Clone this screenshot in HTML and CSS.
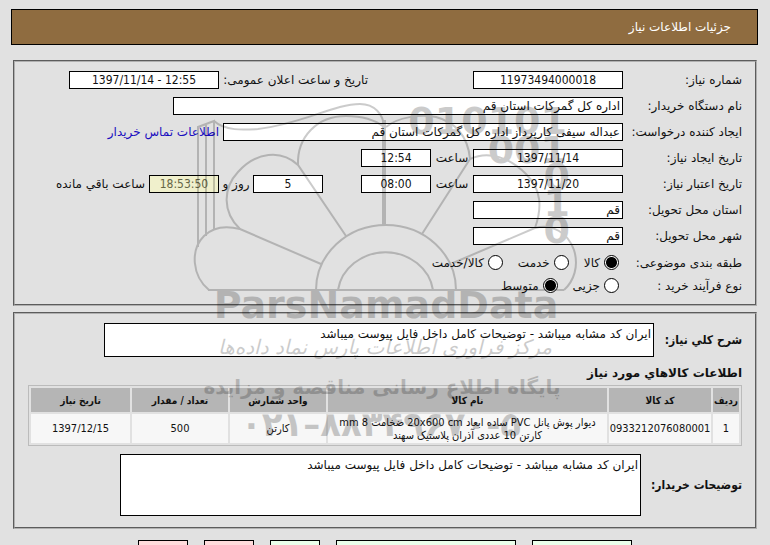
FILE: index.html
```html
<!DOCTYPE html>
<html lang="fa" dir="rtl">
<head>
<meta charset="utf-8">
<title>جزئیات اطلاعات نیاز</title>
<link rel="stylesheet" href="styles.css">
</head>
<body>
<header class="title-bar"><h1>جزئیات اطلاعات نیاز</h1></header>
<main>
<form>
  <section class="panel need">
    <div class="row">
      <label class="name" for="number">شماره نیاز:</label>
      <input class="box medium spaced" id="number" value="11973494000018" readonly>
      <label class="announce" for="announce">تاریخ و ساعت اعلان عمومی:</label>
      <input class="box medium" id="announce" dir="ltr" value="1397/11/14 - 12:55" readonly>
    </div>
    <div class="row">
      <label class="name" for="buyer">نام دستگاه خریدار:</label>
      <input class="box wide" id="buyer" value="اداره کل گمرکات استان قم" readonly>
    </div>
    <div class="row">
      <label class="name" for="creator">ایجاد کننده درخواست:</label>
      <input class="box long" id="creator" value="عبداله سیفی کارپرداز اداره کل گمرکات استان قم" readonly>
      <a class="contact" href="#contact">اطلاعات تماس خریدار</a>
    </div>
    <div class="row">
      <label class="name" for="made">تاریخ ایجاد نیاز:</label>
      <input class="box medium" id="made" value="1397/11/14" readonly>
      <label class="hour" for="made-hour">ساعت</label>
      <input class="box short" id="made-hour" value="12:54" readonly>
    </div>
    <div class="row">
      <label class="name" for="valid">تاریخ اعتبار نیاز:</label>
      <input class="box medium" id="valid" value="1397/11/20" readonly>
      <label class="hour" for="valid-hour">ساعت</label>
      <input class="box short" id="valid-hour" value="08:00" readonly>
      <input class="box short days" id="days" value="5" readonly>
      <label class="day-label" for="days">روز و</label>
      <input class="box short timer" id="left" value="18:53:50" readonly>
      <label class="left-label" for="left">ساعت باقي مانده</label>
    </div>
    <div class="row">
      <label class="name" for="province">استان محل تحویل:</label>
      <input class="box medium start" id="province" value="قم" readonly>
    </div>
    <div class="row">
      <label class="name" for="city">شهر محل تحویل:</label>
      <input class="box medium start" id="city" value="قم" readonly>
    </div>
    <div class="choice-rows">
      <div class="row choices">
        <span class="name">طبقه بندی موضوعی:</span>
        <label><input type="radio" name="kind" checked>کالا</label>
        <label><input type="radio" name="kind">خدمت</label>
        <label><input type="radio" name="kind">کالا/خدمت</label>
      </div>
      <div class="row choices">
        <span class="name">نوع فرآیند خرید :</span>
        <label><input type="radio" name="size">جزیی</label>
        <label><input type="radio" name="size" checked>متوسط</label>
      </div>
    </div>
  </section>

  <section class="panel goods">
    <div class="memo">
      <label class="summary-label" for="summary">شرح کلي نیاز:</label>
      <textarea class="summary" id="summary" readonly>ایران کد مشابه میباشد - توضیحات کامل داخل فایل پیوست میباشد</textarea>
    </div>
    <h2>اطلاعات کالاهاي مورد نیاز</h2>
    <table>
      <thead>
        <tr><th class="c-row">ردیف</th><th class="c-code">کد کالا</th><th class="c-name">نام کالا</th><th class="c-unit">واحد شمارش</th><th class="c-count">تعداد / مقدار</th><th class="c-date">تاریخ نیاز</th></tr>
      </thead>
      <tbody>
        <tr><td>1</td><td>0933212076080001</td><td>دیوار پوش پانل PVC ساده ابعاد 20x600 cm ضخامت 8 mm<br>کارتن 10 عددی آذران پلاستیک سهند</td><td>کارتن</td><td>500</td><td>1397/12/15</td></tr>
      </tbody>
    </table>
    <div class="memo">
      <label class="notes-label" for="notes">توضیحات خریدار:</label>
      <textarea class="notes" id="notes" readonly>ایران کد مشابه میباشد - توضیحات کامل داخل فایل پیوست میباشد</textarea>
    </div>
  </section>

  <div class="actions">
    <button class="go b-medium" type="button" aria-label="پاسخ"></button>
    <button class="go b-wide" type="button" aria-label="مشاهده"></button>
    <button class="go" type="button" aria-label="چاپ"></button>
    <button class="stop" type="button" aria-label="بازگشت"></button>
    <button class="stop" type="button" aria-label="خروج"></button>
  </div>
</form>
</main>
<svg class="watermark" viewBox="0 0 770 545" direction="ltr" aria-hidden="true">
  <g fill="none" stroke="#000" stroke-width="2">
    <path d="M316 290A70 65 0 0 1 456 290M338 290A48 44 0 0 1 433 290M208 290H564"/>
    <path d="M209 290C192 276 190 250 204 236C214 226 228 226 240 229L321 264"/>
    <path d="M240 229C222 212 223 188 238 172C256 152 281 149 298 165L346 236"/>
    <path d="M298 165C297 137 317 116 346 116C362 116 374 119 384 127M386 127C398 117 420 114 436 117C455 122 468 136 470 159L422 234"/>
    <path d="M470 159C489 150 510 158 526 174C542 190 542 208 535 228L453 263"/>
    <path d="M535 228C552 223 568 233 574 250C579 266 574 281 564 290"/>
    <path d="M214 121C225 131 243 130 258 129C302 124 334 104 360 104C374 104 384 114 384 128M198 247V127L214 121V230M206 236V124"/>
    <path stroke-width="4" d="M384 120V225"/>
  </g>
  <g class="digits">
    <text x="567" y="134">010101</text><text x="567" y="163">001</text><text x="570" y="190">0</text><text x="570" y="216">1</text><text x="570" y="243">0</text>
  </g>
  <text class="brand" x="386" y="318">ParsNamadData</text>
  <text class="script" x="385" y="354" direction="rtl">مرکز فرآوری اطلاعات پارس نماد داده‌ها</text>
  <text class="slogan" x="382" y="394" direction="rtl">پایگاه اطلاع رسانی مناقصه و مزایده</text>
  <text class="phone" x="381" y="436">۰۲۱–۸۸۳۴۹۶۷۰-۵</text>
</svg>
</body>
</html>
```
FILE: styles.css
```css
* { box-sizing: border-box; }
body {
  position: relative;
  height: 100vh;
  overflow: hidden;
  margin: 0;
  padding: 9px 12px 0 11px;
  background: #e1e1e1;
  color: #111;
  font: 12px/16px "DejaVu Sans", sans-serif;
}
.title-bar {
  display: flex;
  align-items: center;
  height: 36px;
  padding: 0 26px;
  border: 1px solid #000;
  background: #8f6c40;
}
h1 { margin: 0; color: #fff; font-size: 12px; font-weight: normal; }
main { padding: 0 1px 0 2px; }
.panel { border: 2px groove #b0b0b0; padding: 9px 13px 11px; }
.need { display: flex; flex-direction: column; gap: 8px; margin-top: 15px; }
.row { display: flex; align-items: center; height: 18px; white-space: nowrap; }
.name { width: 119px; }
.box, textarea {
  margin: 0;
  border: 1px solid #000;
  border-radius: 0;
  background: #fff;
  color: #111;
  font: inherit;
}
.box { height: 18px; padding: 0 2px; text-align: center; }
.medium { width: 150px; }
.short { width: 70px; }
.medium, .short { font-family: "DejaVu Sans Condensed", "DejaVu Sans", sans-serif; }
.wide { width: 450px; text-align: right; }
.long { width: 400px; text-align: right; }
.start { text-align: right; font-family: "DejaVu Sans", sans-serif; }
.spaced { margin-left: 105px; }
.announce { width: 149px; }
.contact { margin-right: 4px; color: #1a0dbf; text-decoration: none; }
.hour { width: 42px; text-align: center; }
.days { margin-right: 38px; }
.day-label { width: 34px; text-align: center; }
.timer { background: #f0f0cc; color: #666646; }
.left-label { margin-right: 4px; }
.choice-rows { display: flex; flex-direction: column; gap: 8px; margin-top: 2px; }
.choices { height: 15px; gap: 15px; }
.choices .name { width: 108px; }
.choices label { display: flex; align-items: center; gap: 4px; }
.choices input {
  appearance: none;
  width: 15px;
  height: 15px;
  margin: 0;
  border: 1px solid #000;
  border-radius: 50%;
  background: #fff;
}
.choices input:checked { background: radial-gradient(circle, #000 5px, #fff 6px); }
.goods { margin-top: 6px; }
.memo { display: flex; align-items: center; gap: 4px; }
.memo label {
  flex: none;
  font-family: "DejaVu Sans Condensed", "DejaVu Sans", sans-serif;
  font-weight: bold;
}
.summary-label { width: 84px; }
.notes-label { width: 97px; }
textarea {
  display: block;
  resize: none;
  overflow: hidden;
  padding: 2px;
}
.summary { width: 77%; height: 34px; }
.notes { width: 73%; height: 62px; }
h2 { margin: 8px 0 4px; font-size: 12px; line-height: 16px; }
table {
  width: 100%;
  margin-bottom: 8px;
  border: 1px solid #bbb;
  border-spacing: 2px;
  table-layout: fixed;
  font-family: "DejaVu Sans Condensed", "DejaVu Sans", sans-serif;
  font-size: 11px;
  line-height: 13px;
  text-align: center;
}
th { height: 24px; padding: 0; background: #b5b5b5; font-size: 10px; }
td { height: 29px; padding: 0; background: #f7f7f7; }
.c-row { width: 26px; }
.c-code { width: 102px; }
.c-unit, .c-count { width: 96px; }
.c-date { width: 99px; }
.actions { display: flex; gap: 16px; margin: 11px 125px 0 0; }
button { width: 50px; height: 24px; padding: 0; border: 1px solid #000; }
.b-medium { width: 100px; }
.b-wide { width: 180px; }
.go { background: #ebffeb; }
.stop { background: #ffdcdc; }
.watermark {
  position: absolute;
  top: 0;
  left: 50%;
  width: 770px;
  height: 545px;
  margin-left: -385px;
  opacity: .2;
  pointer-events: none;
}
.watermark text { text-anchor: middle; }
.watermark .digits text { font: bold 38px "DejaVu Sans", sans-serif; text-anchor: end; }
.watermark .brand { font: bold 38px "DejaVu Sans", sans-serif; }
.watermark .script { font: italic 20px "DejaVu Sans", sans-serif; }
.watermark .slogan { font: bold 20px "DejaVu Sans", sans-serif; }
.watermark .phone { font: bold 34px "DejaVu Sans", sans-serif; }
```
